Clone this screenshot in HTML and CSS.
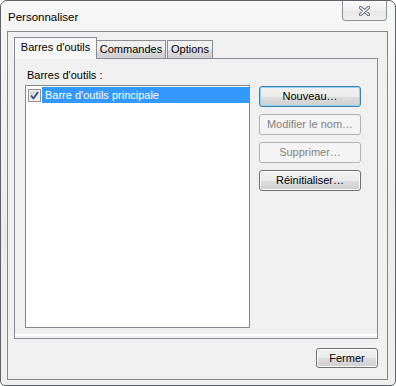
FILE: index.html
```html
<!DOCTYPE html>
<html lang="fr">
<head>
<meta charset="utf-8">
<title>Personnaliser</title>
<link rel="stylesheet" href="styles.css">
</head>
<body>
<div class="window">
  <div class="titlebar">
    <span class="title">Personnaliser</span>
    <div class="close">
      <svg width="11" height="10" viewBox="0 0 11 10">
        <path d="M1.5 1.5 L9.5 8.5 M9.5 1.5 L1.5 8.5" stroke="#5a6370" stroke-width="3.2" stroke-linecap="round" fill="none"/>
        <path d="M1.5 1.5 L9.5 8.5 M9.5 1.5 L1.5 8.5" stroke="#ffffff" stroke-width="1.4" stroke-linecap="round" fill="none"/>
      </svg>
    </div>
  </div>
  <div class="client">
    <div class="tabs">
      <div class="tab tab-active">Barres d'outils</div>
      <div class="tab tab-cmd">Commandes</div>
      <div class="tab tab-opt">Options</div>
    </div>
    <div class="panel">
      <div class="label">Barres d'outils :</div>
      <div class="listbox">
        <div class="item">
          <span class="check">
            <svg width="9" height="9" viewBox="0 0 9 9">
              <path d="M1 4.5 L3.5 7.5 L8 1" stroke="#3b4f7c" stroke-width="1.8" fill="none" stroke-linejoin="round"/>
            </svg>
          </span>
          <span class="item-text">Barre d'outils principale</span>
        </div>
      </div>
      <div class="buttons">
        <div class="btn btn-focus">Nouveau…</div>
        <div class="btn btn-disabled">Modifier le nom…</div>
        <div class="btn btn-disabled">Supprimer…</div>
        <div class="btn">Réinitialiser…</div>
      </div>
    </div>
    <div class="footer">
      <div class="btn btn-close">Fermer</div>
    </div>
  </div>
</div>
</body>
</html>
```
FILE: styles.css
```css
html, body {
  margin: 0;
  padding: 0;
  background: #ffffff;
}
body {
  font-family: "Segoe UI", "Liberation Sans", Arial, sans-serif;
  font-size: 11px;
  color: #000;
}
.window {
  width: 396px;
  height: 386px;
  box-sizing: border-box;
  border: 1px solid #5e6166;
  border-radius: 7px 7px 5px 5px;
  background: linear-gradient(#f7f7f7, #ececec 60%, #efefef);
  padding: 0 7px 5px 6px;
  display: flex;
  flex-direction: column;
}
.titlebar {
  height: 30px;
  display: flex;
  justify-content: space-between;
  align-items: flex-start;
}
.title {
  margin: 8px 0 0 1px;
  line-height: 16px;
  font-size: 11.5px;
}
.close {
  width: 45px;
  height: 20px;
  box-sizing: border-box;
  border: 1px solid #8d9197;
  border-top: none;
  border-radius: 0 0 4px 4px;
  background: linear-gradient(#fbfbfb, #eeeeee 50%, #e6e6e6 51%, #f1f1f1);
  display: flex;
  align-items: center;
  justify-content: center;
  margin-right: 1px;
}
.client {
  flex: 1;
  border: 1px solid #84878c;
  background: #f0f0f0;
  padding: 5px 9px 11px 6px;
  display: flex;
  flex-direction: column;
}
.tabs {
  height: 21px;
  display: flex;
  align-items: flex-end;
  position: relative;
  z-index: 1;
}
.tab {
  box-sizing: border-box;
  height: 18px;
  border: 1px solid #898c95;
  border-bottom: none;
  background: linear-gradient(#f2f2f2, #ebebeb 50%, #dddddd 51%, #cfcfcf);
  text-align: center;
  line-height: 17px;
}
.tab-active {
  width: 83px;
  height: 22px;
  margin-bottom: -1px;
  background: #f7f7f7;
  line-height: 19px;
}
.tab-cmd {
  width: 69px;
  border-left: none;
}
.tab-opt {
  width: 46px;
  margin-left: 1px;
}
.panel {
  height: 281px;
  box-sizing: border-box;
  border: 1px solid #898c95;
  background: #f0f0f0;
  box-shadow: inset 0 -2px 0 #f0f0f0, inset 0 -4px 0 #ffffff;
  padding: 8px 0 0 10px;
  display: grid;
  grid-template-columns: 225px 102px;
  grid-template-rows: 16px 243px;
  column-gap: 9px;
  row-gap: 2px;
}
.label {
  grid-column: 1;
  grid-row: 1;
  line-height: 16px;
  padding-left: 2px;
}
.listbox {
  grid-column: 1;
  grid-row: 2;
  box-sizing: border-box;
  border: 1px solid #828790;
  background: #ffffff;
  padding: 1px 0 0 2px;
}
.item {
  height: 16px;
  display: flex;
  align-items: center;
}
.check {
  width: 13px;
  height: 13px;
  box-sizing: border-box;
  border: 1px solid #8e8f8f;
  background: linear-gradient(135deg, #cbcfd5, #f6f6f6);
  box-shadow: inset 0 0 0 1px #f4f4f4;
  display: flex;
  align-items: center;
  justify-content: center;
  margin-right: 1px;
}
.item-text {
  flex: 1;
  height: 16px;
  background: #3399ff;
  color: #ffffff;
  line-height: 16px;
  padding-left: 3px;
}
.buttons {
  grid-column: 2;
  grid-row: 2;
  padding-top: 1px;
  display: flex;
  flex-direction: column;
  gap: 7px;
}
.btn {
  box-sizing: border-box;
  height: 21px;
  border: 1px solid #707070;
  border-radius: 3px;
  background: linear-gradient(#f2f2f2, #ebebeb 50%, #dddddd 51%, #cfcfcf);
  box-shadow: inset 0 0 0 1px #fcfcfc;
  text-align: center;
  line-height: 19px;
}
.btn-focus {
  border-color: #3c7fb1;
  box-shadow: inset 0 0 0 1px #8fd4f6;
}
.btn-disabled {
  border-color: #adb2b5;
  background: #f4f4f4;
  box-shadow: none;
  color: #838383;
}
.footer {
  margin-top: 9px;
  display: flex;
  justify-content: flex-end;
}
.btn-close {
  width: 62px;
  height: 20px;
  line-height: 18px;
}
```
